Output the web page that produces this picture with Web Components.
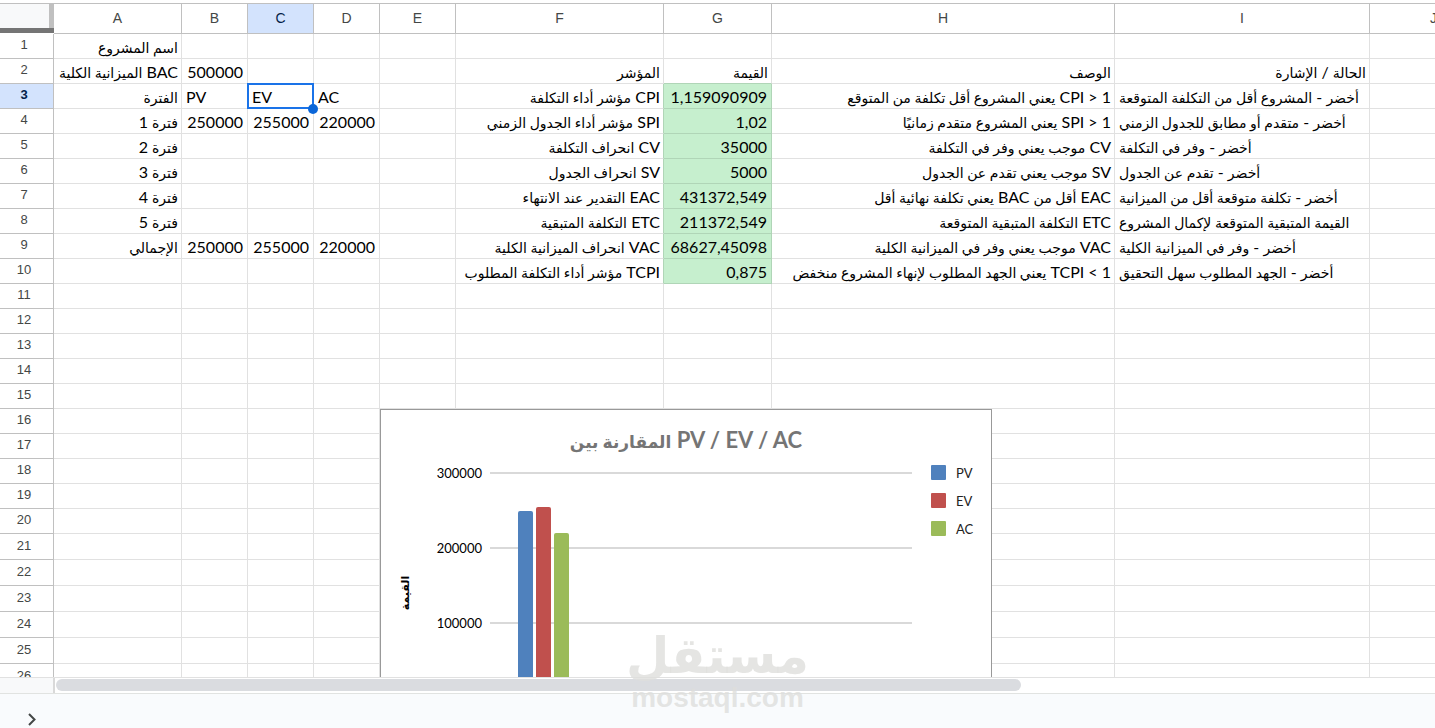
<!DOCTYPE html>
<html lang="ar">
<head>
<meta charset="utf-8">
<title>EVM</title>
<style>
    html, body { height: 100%; }
    body {
        margin: 0;
        background: #fff;
        color: #000;
        font-family: Lato, "DejaVu Sans", sans-serif;
        overflow: hidden;
    }
</style>
</head>
<body>

<sheet-app>
    <sheet-grid></sheet-grid>
    <sheet-chart slot="floating"></sheet-chart>
    <sheet-scrollbar slot="footer"></sheet-scrollbar>
    <sheet-tabs slot="footer"></sheet-tabs>
    <water-mark slot="overlay" word="مستقل">mostaql.com</water-mark>
</sheet-app>

<script>
const COLUMNS = [
    ['A', 128], ['B', 66], ['C', 66], ['D', 66], ['E', 76],
    ['F', 208], ['G', 108], ['H', 343], ['I', 255], ['J', 128]
]

const CELLS = {
    A1: 'اسم المشروع',
    A2: 'BAC الميزانية الكلية', B2: '500000',
    F2: 'المؤشر', G2: 'القيمة', H2: 'الوصف', I2: 'الحالة / الإشارة',

    A3: 'الفترة', B3: 'PV', C3: 'EV', D3: 'AC',
    F3: 'CPI مؤشر أداء التكلفة', G3: '1,159090909',
    H3: 'CPI > 1 يعني المشروع أقل تكلفة من المتوقع',
    I3: 'أخضر - المشروع أقل من التكلفة المتوقعة',

    A4: 'فترة 1', B4: '250000', C4: '255000', D4: '220000',
    F4: 'SPI مؤشر أداء الجدول الزمني', G4: '1,02',
    H4: 'SPI > 1 يعني المشروع متقدم زمانيًا',
    I4: 'أخضر - متقدم أو مطابق للجدول الزمني',

    A5: 'فترة 2',
    F5: 'CV انحراف التكلفة', G5: '35000',
    H5: 'CV موجب يعني وفر في التكلفة',
    I5: 'أخضر - وفر في التكلفة',

    A6: 'فترة 3',
    F6: 'SV انحراف الجدول', G6: '5000',
    H6: 'SV موجب يعني تقدم عن الجدول',
    I6: 'أخضر - تقدم عن الجدول',

    A7: 'فترة 4',
    F7: 'EAC التقدير عند الانتهاء', G7: '431372,549',
    H7: 'EAC أقل من BAC يعني تكلفة نهائية أقل',
    I7: 'أخضر - تكلفة متوقعة أقل من الميزانية',

    A8: 'فترة 5',
    F8: 'ETC التكلفة المتبقية', G8: '211372,549',
    H8: 'ETC التكلفة المتبقية المتوقعة',
    I8: 'القيمة المتبقية المتوقعة لإكمال المشروع',

    A9: 'الإجمالي', B9: '250000', C9: '255000', D9: '220000',
    F9: 'VAC انحراف الميزانية الكلية', G9: '68627,45098',
    H9: 'VAC موجب يعني وفر في الميزانية الكلية',
    I9: 'أخضر - وفر في الميزانية الكلية',

    F10: 'TCPI مؤشر أداء التكلفة المطلوب', G10: '0,875',
    H10: 'TCPI < 1 يعني الجهد المطلوب لإنهاء المشروع منخفض',
    I10: 'أخضر - الجهد المطلوب سهل التحقيق'
}

const ARABIC = /[\u0600-\u06ff]/

function escapeHtml(text) {
    return text.replace(/&/g, '&amp;').replace(/</g, '&lt;').replace(/>/g, '&gt;')
}

// Arabic runs get their own span, the fallback face is wider than Lato
function markArabic(text) {
    return escapeHtml(text).replace(/[\u0600-\u06ff]+( [\u0600-\u06ff]+)*/g, '<span class="ar">$&</span>')
}

class SheetApp extends HTMLElement {

    constructor() {
        super()
        this.attachShadow({ mode: 'open' })
    }

    connectedCallback() {
        this.shadowRoot.innerHTML = /*html*/`
        <style>
            :host {
                display: flex;
                flex-direction: column;
                height: 100vh;
                position: relative;
                overflow: hidden;
            }
            main {
                flex: 1;
                min-height: 0;
                position: relative;
                overflow: hidden;
                padding-top: 3px;
            }
        </style>
        <main>
            <slot></slot>
            <slot name="floating"></slot>
        </main>
        <slot name="footer"></slot>
        <slot name="overlay"></slot>
      `
    }
}

class SheetGrid extends HTMLElement {

    constructor() {
        super()
        this.attachShadow({ mode: 'open' })
        this.selected = 'C3'
    }

    connectedCallback() {
        this.render()
    }

    cell(col, row) {
        const id = col + row
        const text = CELLS[id] || ''
        const classes = []
        if (ARABIC.test(text)) classes.push('rtl')
        if (/^[\d,]+$/.test(text)) classes.push('num')
        if (col === 'I' && row > 2) classes.push('start')
        if (col === 'G' && row > 2 && row < 11) classes.push('good')
        // the fill also tints the line it shares with its neighbours
        if (col === 'G' && row === 2) classes.push('above-good')
        if (col === 'F' && row > 2 && row < 11) classes.push('before-good')
        if (id === this.selected) classes.push('selected')
        return `<td class="${classes.join(' ')}">${text ? `<div>${markArabic(text)}</div>` : ''}</td>`
    }

    row(n) {
        const active = n === Number(this.selected.slice(1))
        return `<tr class="${n > 20 ? 'tall' : ''}">
            <th scope="row" class="${active ? 'active' : ''}">${n}</th>
            ${COLUMNS.map(([col]) => this.cell(col, n)).join('')}
        </tr>`
    }

    render() {
        const rows = Array.from({ length: 26 }, (_, i) => this.row(i + 1))
        const total = COLUMNS.reduce((sum, col) => sum + col[1], 54)

        this.shadowRoot.innerHTML = /*html*/`
        <style>
            :host { display: block; }
            table {
                width: ${total}px;
                table-layout: fixed;
                border-collapse: separate;
                border-spacing: 0;
            }
            th, td {
                box-sizing: border-box;
                height: 25px;
                padding: 0;
                border: 0 solid #e1e1e1;
                border-width: 0 1px 1px 0;
            }
            .tall > * { height: 26px; }
            th {
                border-color: #c0c0c0;
                color: #444746;
                font: 14px/16px "Liberation Sans", sans-serif;
            }
            thead > tr > * {
                height: 31px;
                border-top: 1px solid #c0c0c0;
            }
            thead th { padding-bottom: 2px; }
            tbody th {
                padding: 0 5px 2px 0;
                font-size: 13px;
            }
            .active {
                background: #d3e3fd;
                color: #041e49;
            }
            tbody .active { font-weight: bold; }
            .corner {
                background: #f8f9fa;
                border-right: 0;
                border-bottom-color: #fff;
                box-shadow: inset 0 -5px #757575, inset -5px 0 #c0c0c0;
            }
            td > div {
                box-sizing: border-box;
                height: 24px;
                padding: 1px 4px 0;
                font-size: 16px;
                line-height: 24px;
                white-space: nowrap;
            }
            .rtl > div {
                direction: rtl;
                text-align: right;
                padding-right: 3px;
            }
            .ar { font-size: 14px; }
            .num > div { text-align: right; }
            .start > div { text-align: left; }
            .good {
                background: #c6efce;
                border-color: #b0d5b7;
            }
            .above-good { border-bottom-color: #b0d5b7; }
            .before-good { border-right-color: #b0d5b7; }
            .selected { position: relative; }
            .selected::before {
                content: "";
                position: absolute;
                inset: -1px;
                border: 2px solid #1a73e8;
            }
            .selected::after {
                content: "";
                position: absolute;
                right: -5px;
                bottom: -6px;
                width: 10px;
                height: 10px;
                border-radius: 50%;
                background: #0b66d8;
            }
        </style>
        <table>
            <colgroup>
                <col style="width: 54px">
                ${COLUMNS.map(([, width]) => `<col style="width: ${width}px">`).join('')}
            </colgroup>
            <thead>
                <tr>
                    <td class="corner"></td>
                    ${COLUMNS.map(([col]) => `<th scope="col" class="${col === this.selected[0] ? 'active' : ''}">${col}</th>`).join('')}
                </tr>
            </thead>
            <tbody>${rows.join('')}</tbody>
        </table>
      `
    }
}

class SheetChart extends HTMLElement {

    constructor() {
        super()
        this.attachShadow({ mode: 'open' })
        this.series = [
            { name: 'PV', value: 250000, color: '#4f81bd' },
            { name: 'EV', value: 255000, color: '#c0504d' },
            { name: 'AC', value: 220000, color: '#9bbb59' }
        ]
    }

    connectedCallback() {
        this.render()
    }

    y(value) {
        return Math.round(288 - value * 75 / 100000)
    }

    render() {
        const ticks = [300000, 200000, 100000, 0]

        this.shadowRoot.innerHTML = /*html*/`
        <style>
            :host {
                display: block;
                position: absolute;
                left: 380px;
                top: 409px;
                background: #fff;
                border: 1px solid #999;
            }
            svg { display: block; }
            text { font-size: 13px; }
            .title {
                font-size: 22px;
                font-weight: bold;
                fill: #757575;
            }
            .title .ar { font-size: 17px; }
            .tick { text-anchor: end; }
            .axis {
                font-size: 11px;
                font-weight: bold;
                text-anchor: middle;
            }
        </style>
        <svg width="610" height="370">
            <text class="title" x="305" y="38" text-anchor="middle"><tspan class="ar">المقارنة بين</tspan> PV / EV / AC</text>
            ${ticks.map(t => `
                <text class="tick" x="101" y="${this.y(t) + 5}">${t}</text>
                <rect x="109" y="${this.y(t) - 1}" width="422" height="2" fill="#d9d9d9"/>
            `).join('')}
            <text class="axis" transform="translate(28 183) rotate(-90)">القيمة</text>
            ${this.series.map((s, i) => `
                <rect x="${137 + i * 18}" y="${this.y(s.value)}" width="15" height="${288 - this.y(s.value)}" rx="2" fill="${s.color}"/>
                <rect x="550" y="${55 + i * 28}" width="15" height="15" rx="1" fill="${s.color}"/>
                <text x="575" y="${68 + i * 28}" fill="#222">${s.name}</text>
            `).join('')}
        </svg>
      `
    }
}

class SheetScrollbar extends HTMLElement {

    constructor() {
        super()
        this.attachShadow({ mode: 'open' })
    }

    connectedCallback() {
        this.shadowRoot.innerHTML = /*html*/`
        <style>
            :host {
                display: flex;
                height: 15px;
                border-top: 1px solid #e1e1e1;
                background: #fff;
            }
            .gutter {
                box-sizing: border-box;
                width: 55px;
                background: #f8f9fa;
                border-right: 2px solid #d9d9d9;
            }
            .track {
                flex: 1;
                padding: 1px;
            }
            .thumb {
                width: 70%;
                height: 12px;
                border-radius: 6px;
                background: #dadce0;
            }
        </style>
        <div class="gutter"></div>
        <div class="track"><div class="thumb"></div></div>
      `
    }
}

class SheetTabs extends HTMLElement {

    constructor() {
        super()
        this.attachShadow({ mode: 'open' })
    }

    connectedCallback() {
        this.shadowRoot.innerHTML = /*html*/`
        <style>
            :host {
                display: flex;
                align-items: flex-end;
                height: 34px;
                padding-left: 20px;
                border-top: 1px solid #e1e3e1;
                background: #f9fbfd;
            }
            button {
                display: flex;
                padding: 0;
                border: 0;
                background: none;
            }
        </style>
        <button type="button" aria-label="التالي">
            <svg width="24" height="18" fill="none" stroke="#444746" stroke-width="2">
                <path d="M9 4 L14.5 9.5 L9 15"/>
            </svg>
        </button>
      `
    }
}

class WaterMark extends HTMLElement {

    constructor() {
        super()
        this.attachShadow({ mode: 'open' })
    }

    connectedCallback() {
        this.shadowRoot.innerHTML = /*html*/`
        <style>
            :host {
                position: absolute;
                left: 50%;
                bottom: 14px;
                transform: translateX(-50%);
                display: flex;
                flex-direction: column;
                align-items: center;
                color: rgba(222, 222, 220, .8);
                font: bold 28px/32px "Liberation Sans", sans-serif;
                pointer-events: none;
            }
            .word {
                font: bold 50px/52px "DejaVu Sans", sans-serif;
            }
        </style>
        <span class="word" dir="rtl">${this.getAttribute('word')}</span>
        <span><slot></slot></span>
      `
    }
}

customElements.define('sheet-app', SheetApp)
customElements.define('sheet-grid', SheetGrid)
customElements.define('sheet-chart', SheetChart)
customElements.define('sheet-scrollbar', SheetScrollbar)
customElements.define('sheet-tabs', SheetTabs)
customElements.define('water-mark', WaterMark)
</script>
</body>
</html>
